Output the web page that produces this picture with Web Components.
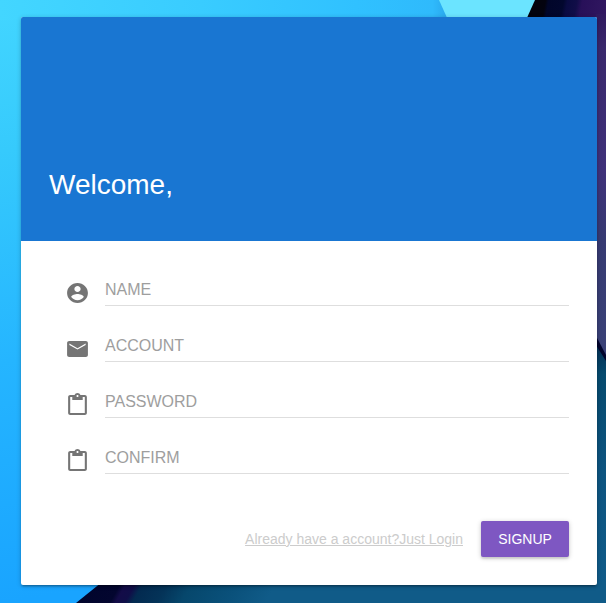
<!DOCTYPE html>
<html lang="en">
<head>
<meta charset="utf-8">
<title>Welcome</title>
<style>
html, body { margin: 0; height: 100%; overflow: hidden; }
body { font-family: "Liberation Sans", Arial, sans-serif; }
</style>
</head>
<body>
<signup-page></signup-page>
<script>
const define = (name, html) => customElements.define(name, class extends HTMLElement {
  constructor() {
    super();
    const t = document.createElement('template');
    t.innerHTML = html;
    this.attachShadow({ mode: 'open' }).append(t.content.cloneNode(true));
  }
  connectedCallback() {
    const icon = this.getAttribute('icon');
    if (icon) this.shadowRoot.querySelector('path').setAttribute('d', ICONS[icon]);
  }
});

const ICONS = {
  account: 'M12 2C6.48 2 2 6.48 2 12s4.48 10 10 10 10-4.48 10-10S17.52 2 12 2zm0 3c1.66 0 3 1.34 3 3s-1.34 3-3 3-3-1.34-3-3 1.34-3 3-3zm0 14.2c-2.5 0-4.71-1.28-6-3.22.03-1.99 4-3.08 6-3.08 1.99 0 5.97 1.09 6 3.08-1.29 1.94-3.5 3.22-6 3.22z',
  email: 'M20 4H4c-1.1 0-1.99.9-1.99 2L2 18c0 1.1.9 2 2 2h16c1.1 0 2-.9 2-2V6c0-1.1-.9-2-2-2zm-.2 3.9L12 12.6 4.2 7.9V6.5l7.8 4.7 7.8-4.7v1.4z',
  clipboard: 'M19 2h-4.18C14.4.84 13.3 0 12 0c-1.3 0-2.4.84-2.82 2H5c-1.1 0-2 .9-2 2v16c0 1.1.9 2 2 2h14c1.1 0 2-.9 2-2V4c0-1.1-.9-2-2-2zm-7 0c.55 0 1 .45 1 1s-.45 1-1 1-1-.45-1-1 .45-1 1-1zm7 18H5V4h2v3h10V4h2v16z'
};

define('page-backdrop', `
<style>
:host { display: block; position: absolute; inset: 0; z-index: -1; }
svg { display: block; width: 100%; height: 100%; }
</style>
<svg viewBox="0 0 606 603" preserveAspectRatio="none">
  <defs>
    <linearGradient id="sky" gradientUnits="userSpaceOnUse" x1="0" y1="0" x2="90" y2="590">
      <stop offset="0" stop-color="#43d6ff"/><stop offset=".25" stop-color="#36cafc"/>
      <stop offset=".6" stop-color="#25b5ff"/><stop offset="1" stop-color="#19a4ff"/>
    </linearGradient>
    <linearGradient id="top" gradientUnits="userSpaceOnUse" x1="0" y1="0" x2="446" y2="0">
      <stop offset="0" stop-color="#43d6ff"/><stop offset=".45" stop-color="#39ccff"/>
      <stop offset=".8" stop-color="#30c1ff"/><stop offset=".97" stop-color="#2fbafc"/>
      <stop offset="1" stop-color="#2aa9ee"/>
    </linearGradient>
    <linearGradient id="night" gradientUnits="userSpaceOnUse" x1="530" y1="0" x2="606" y2="14">
      <stop offset="0" stop-color="#03030c"/><stop offset=".2" stop-color="#03030f"/>
      <stop offset=".24" stop-color="#01062a"/><stop offset=".43" stop-color="#02072e"/>
      <stop offset=".48" stop-color="#0a0b42"/><stop offset=".6" stop-color="#110d48"/>
      <stop offset=".67" stop-color="#281059"/><stop offset="1" stop-color="#311760"/>
    </linearGradient>
    <linearGradient id="violet" x1="0" y1="0" x2="0" y2="1">
      <stop offset="0" stop-color="#30195f"/><stop offset=".1" stop-color="#39286c"/>
      <stop offset=".45" stop-color="#3f317a"/><stop offset=".65" stop-color="#363a72"/>
      <stop offset="1" stop-color="#3a4278"/>
    </linearGradient>
    <linearGradient id="sea" gradientUnits="userSpaceOnUse" x1="88" y1="585" x2="230" y2="665">
      <stop offset="0" stop-color="#01052d"/><stop offset=".17" stop-color="#03062f"/>
      <stop offset=".2" stop-color="#130c48"/><stop offset=".25" stop-color="#100e48"/>
      <stop offset=".29" stop-color="#032a50"/><stop offset=".42" stop-color="#043358"/>
      <stop offset=".55" stop-color="#06476c"/><stop offset=".8" stop-color="#0a517b"/>
      <stop offset="1" stop-color="#105b88"/>
    </linearGradient>
    <linearGradient id="edge" x1="0" y1="0" x2="0" y2="1">
      <stop offset="0" stop-color="#042b50"/><stop offset=".13" stop-color="#064a6e"/>
      <stop offset=".5" stop-color="#0d5480"/><stop offset="1" stop-color="#105c8a"/>
    </linearGradient>
  </defs>
  <path fill="url(#sky)" d="M0 0H606V603H0z"/>
  <path fill="url(#top)" d="M0 0H450V20H0z"/>
  <path fill="#6be4ff" d="M439 0H536L527 20H448z"/>
  <path fill="url(#night)" d="M535 0H606V20H526z"/>
  <path fill="url(#violet)" d="M596 14H606V360H596z"/>
  <path fill="url(#edge)" d="M596 340L606 358V603H596z"/>
  <path fill="#01052d" d="M596 336L606 355V361L596 345z"/>
  <path fill="url(#sea)" d="M76 603L102 582H606V603z"/>
</svg>`);

define('form-field', `
<style>
:host { display: flex; height: 56px; align-items: flex-start; }
svg { width: 25px; height: 24px; margin: 12px 15px 0 0; fill: #757575; flex: none; }
div { flex: 1; height: 36px; border-bottom: 1px solid #dedede; color: #9e9e9e; font-size: 16px; line-height: 41px; white-space: nowrap; }
</style>
<svg viewBox="0 0 24 24" preserveAspectRatio="none"><path/></svg><div><slot></slot></div>`);

define('action-button', `
<style>
:host { display: flex; align-items: center; justify-content: center; width: 88px; height: 36px; border-radius: 2px; background: #7e57c2; color: #fff; font-size: 14px; box-shadow: 0 1px 5px rgba(0,0,0,.2), 0 2px 2px rgba(0,0,0,.1); }
</style><slot></slot>`);

define('welcome-card', `
<style>
:host { display: flex; flex-direction: column; width: 576px; height: 568px; border-radius: 2px; overflow: hidden; background: #fff; box-shadow: 0 1px 5px rgba(0,0,0,.2), 0 2px 2px rgba(0,0,0,.14), 0 3px 1px -2px rgba(0,0,0,.12); }
header { box-sizing: border-box; height: 224px; padding: 151px 28px 0; background: #1976d2; color: #fff; font-size: 28px; line-height: 34px; }
main { padding: 28px 28px 0 44px; }
footer { display: flex; justify-content: flex-end; align-items: center; gap: 18px; padding: 28px 28px 0; }
</style>
<header><slot name="title"></slot></header>
<main><slot></slot></main>
<footer><slot name="actions"></slot></footer>`);

define('signup-page', `
<style>
:host { display: block; position: relative; box-sizing: border-box; width: 606px; height: 603px; padding: 17px 0 0 21px; overflow: hidden; isolation: isolate; }
a { color: #ccc; font-size: 14px; text-decoration: underline; white-space: nowrap; }
</style>
<page-backdrop></page-backdrop>
<welcome-card>
  <span slot="title">Welcome,</span>
  <form-field icon="account">NAME</form-field>
  <form-field icon="email">ACCOUNT</form-field>
  <form-field icon="clipboard">PASSWORD</form-field>
  <form-field icon="clipboard">CONFIRM</form-field>
  <a slot="actions">Already have a account?Just Login</a>
  <action-button slot="actions">SIGNUP</action-button>
</welcome-card>`);
</script>
</body>
</html>
